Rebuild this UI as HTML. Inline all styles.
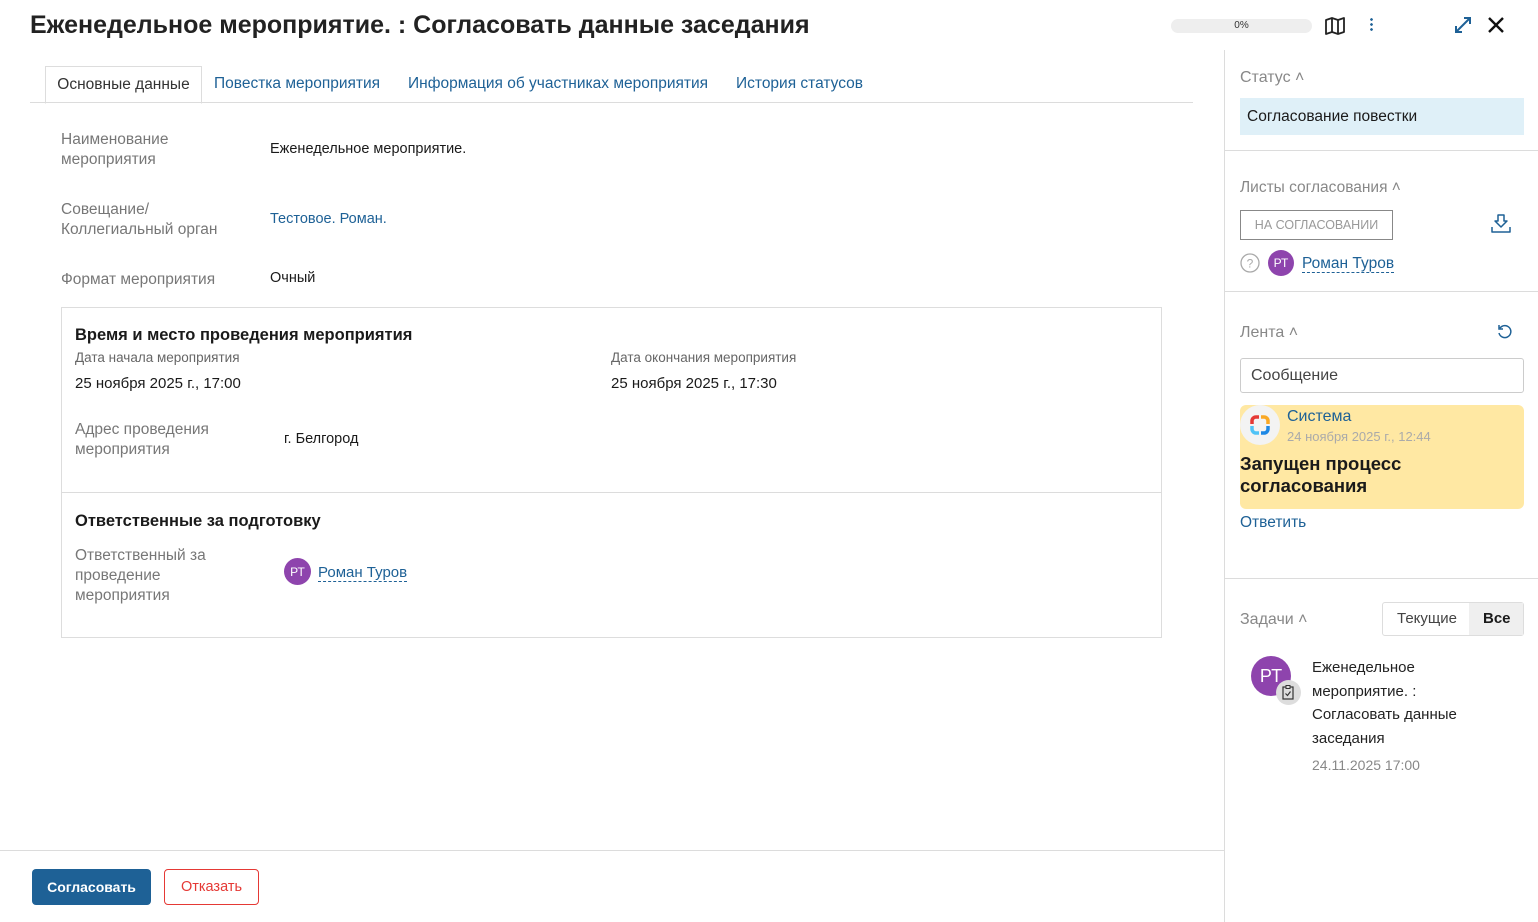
<!DOCTYPE html>
<html><head><meta charset="utf-8"><style>
*{box-sizing:border-box;margin:0;padding:0}
body{width:1538px;height:922px;overflow:hidden;background:#fff;font-family:"Liberation Sans","Noto Sans CJK SC",sans-serif;color:#1a1a1a;position:relative}
.a{position:absolute}
.lbl{color:#777;font-size:15.5px;line-height:20px}
.val{font-size:14.5px}
.blue{color:#1e6196}
.avatar{border-radius:50%;background:#8e44ad;color:#fff;display:flex;align-items:center;justify-content:center}
.sect{color:#888;font-size:16px}
.hr{background:#dcdcdc;height:1px}
</style></head><body>
<div class="a" style="left:30px;top:11px;font-size:25px;font-weight:bold;color:#222">Еженедельное мероприятие. : Согласовать данные заседания</div>
<div class="a" style="left:1171px;top:19px;width:141px;height:14px;background:#eee;border-radius:7px;font-size:10px;text-align:center;line-height:14px;color:#333">0%</div>
<svg class="a" style="left:1324px;top:16px" width="22" height="20" viewBox="0 0 22 20"><path d="M2 4l6-2 6 2 6-2v14l-6 2-6-2-6 2z M8 2v14 M14 4v14" fill="none" stroke="#222" stroke-width="1.8" stroke-linejoin="round"/></svg>
<div class="a" style="left:1370px;top:17px;width:3px;height:14px;background:radial-gradient(circle,#1e6196 1.2px,transparent 1.5px) 0 0/3px 5px"></div>
<svg class="a" style="left:1453px;top:15px" width="20" height="20" viewBox="0 0 20 20"><path d="M3 17L17 3 M11 3h6v6 M3 11v6h6" fill="none" stroke="#1e6196" stroke-width="2"/></svg>
<svg class="a" style="left:1486px;top:15px" width="20" height="20" viewBox="0 0 20 20"><path d="M3 3L17 17M17 3L3 17" stroke="#111" stroke-width="2.4"/></svg>

<div class="a hr" style="left:30px;top:102px;width:1163px"></div>
<div class="a" style="left:45px;top:66px;width:157px;height:38px;border:1px solid #ddd;border-bottom:1px solid #fff;font-size:15.5px;color:#333;text-align:center;line-height:36px">Основные данные</div>
<div class="a blue" style="left:214px;top:75px;font-size:15.5px">Повестка мероприятия</div>
<div class="a blue" style="left:408px;top:75px;font-size:15.5px">Информация об участниках мероприятия</div>
<div class="a blue" style="left:736px;top:75px;font-size:15.5px">История статусов</div>

<div class="a lbl" style="left:61px;top:130px">Наименование<br>мероприятия</div>
<div class="a val" style="left:270px;top:141px">Еженедельное мероприятие.</div>
<div class="a lbl" style="left:61px;top:200px">Совещание/<br>Коллегиальный орган</div>
<div class="a val blue" style="left:270px;top:211px">Тестовое. Роман.</div>
<div class="a lbl" style="left:61px;top:270px">Формат мероприятия</div>
<div class="a val" style="left:270px;top:270px">Очный</div>

<div class="a" style="left:61px;top:307px;width:1101px;height:331px;border:1px solid #ddd"></div>
<div class="a hr" style="left:61px;top:492px;width:1101px"></div>
<div class="a" style="left:75px;top:326px;font-size:16.5px;font-weight:bold">Время и место проведения мероприятия</div>
<div class="a" style="left:75px;top:350px;font-size:13.5px;color:#666">Дата начала мероприятия</div>
<div class="a val" style="left:75px;top:375px;font-size:15px">25 ноября 2025 г., 17:00</div>
<div class="a" style="left:611px;top:350px;font-size:13.5px;color:#666">Дата окончания мероприятия</div>
<div class="a val" style="left:611px;top:375px;font-size:15px">25 ноября 2025 г., 17:30</div>
<div class="a lbl" style="left:75px;top:420px">Адрес проведения<br>мероприятия</div>
<div class="a val" style="left:284px;top:431px">г. Белгород</div>
<div class="a" style="left:75px;top:512px;font-size:16.5px;font-weight:bold">Ответственные за подготовку</div>
<div class="a lbl" style="left:75px;top:546px">Ответственный за<br>проведение<br>мероприятия</div>
<div class="a avatar" style="left:284px;top:558px;width:27px;height:27px;font-size:12px">РТ</div>
<div class="a blue" style="left:318px;top:565px;font-size:15px;border-bottom:1px dashed #1e6196;line-height:16px">Роман Туров</div>

<div class="a hr" style="left:0;top:850px;width:1225px"></div>
<div class="a" style="left:32px;top:869px;width:119px;height:36px;background:#1e6196;border-radius:4px;color:#fff;font-size:14px;font-weight:bold;text-align:center;line-height:36px">Согласовать</div>
<div class="a" style="left:164px;top:869px;width:95px;height:36px;border:1px solid #e53935;border-radius:4px;color:#e53935;font-size:14.5px;text-align:center;line-height:34px">Отказать</div>

<div class="a" style="left:1224px;top:50px;width:1px;height:872px;background:#dcdcdc"></div>
<div class="a sect" style="left:1240px;top:69px">Статус ˄</div>
<div class="a" style="left:1240px;top:98px;width:284px;height:37px;background:#dff0f8;font-size:15.5px;line-height:37px;padding-left:7px">Согласование повестки</div>
<div class="a hr" style="left:1225px;top:150px;width:313px"></div>
<div class="a sect" style="left:1240px;top:179px;font-size:15.5px">Листы согласования ˄</div>
<div class="a" style="left:1240px;top:210px;width:153px;height:30px;border:1px solid #888;font-size:12.5px;color:#999;text-align:center;line-height:28px">НА СОГЛАСОВАНИИ</div>
<svg class="a" style="left:1490px;top:213px" width="22" height="22" viewBox="0 0 22 22"><path d="M8 2h6v6h3l-6 6-6-6h3z M2 14v5h18v-5" fill="none" stroke="#1e6196" stroke-width="1.5" stroke-linejoin="round"/></svg>
<svg class="a" style="left:1240px;top:253px" width="20" height="20" viewBox="0 0 20 20"><circle cx="10" cy="10" r="9" fill="none" stroke="#aaa" stroke-width="1.3"/><text x="10" y="14.5" font-size="12" text-anchor="middle" fill="#aaa" font-family="Liberation Sans">?</text></svg>
<div class="a avatar" style="left:1268px;top:250px;width:26px;height:26px;font-size:12px">РТ</div>
<div class="a blue" style="left:1302px;top:256px;font-size:15.5px;border-bottom:1px dashed #1e6196;line-height:16px">Роман Туров</div>
<div class="a hr" style="left:1225px;top:291px;width:313px"></div>
<div class="a sect" style="left:1240px;top:324px">Лента ˄</div>
<svg class="a" style="left:1496px;top:323px" width="18" height="18" viewBox="0 0 18 18"><path d="M4 5A6 6 0 1 1 3 10 M3 2v4h4" fill="none" stroke="#1e6196" stroke-width="1.5"/></svg>
<div class="a" style="left:1240px;top:358px;width:284px;height:35px;border:1px solid #ccc;border-radius:3px;font-size:16px;color:#444;line-height:33px;padding-left:10px">Сообщение</div>
<div class="a" style="left:1240px;top:405px;width:284px;height:104px;background:#ffe8a3;border-radius:6px"></div>
<div class="a" style="left:1240px;top:405px;width:40px;height:40px;border-radius:50%;background:#f3f3f3"></div>
<svg class="a" style="left:1249px;top:414px" width="22" height="22" viewBox="0 0 22 22"><g fill="none" stroke-width="3.5"><path d="M3 10V7a4 4 0 0 1 4-4h3" stroke="#e53935"/><path d="M12 3h3a4 4 0 0 1 4 4v3" stroke="#f9a825"/><path d="M19 12v3a4 4 0 0 1-4 4h-3" stroke="#1e88e5"/><path d="M10 19H7a4 4 0 0 1-4-4v-3" stroke="#4fc3f7"/></g></svg>
<div class="a blue" style="left:1287px;top:408px;font-size:16px">Система</div>
<div class="a" style="left:1287px;top:429px;font-size:13px;color:#aaa">24 ноября 2025 г., 12:44</div>
<div class="a" style="left:1240px;top:453px;font-size:18.5px;font-weight:bold;line-height:22px">Запущен процесс<br>согласования</div>
<div class="a blue" style="left:1240px;top:514px;font-size:15.5px">Ответить</div>
<div class="a hr" style="left:1225px;top:578px;width:313px"></div>
<div class="a sect" style="left:1240px;top:611px">Задачи ˄</div>
<div class="a" style="left:1382px;top:602px;width:142px;height:34px;border:1px solid #ddd;border-radius:3px"></div>
<div class="a" style="left:1469px;top:603px;width:54px;height:32px;background:#efefef"></div>
<div class="a" style="left:1397px;top:610px;font-size:15px;color:#444">Текущие</div>
<div class="a" style="left:1483px;top:610px;font-size:15px;font-weight:bold">Все</div>
<div class="a avatar" style="left:1251px;top:656px;width:40px;height:40px;font-size:18px">РТ</div>
<div class="a" style="left:1276px;top:680px;width:25px;height:25px;border-radius:50%;background:#ddd"></div>
<svg class="a" style="left:1281px;top:684px" width="14" height="16" viewBox="0 0 14 16"><rect x="2" y="3" width="10" height="12" fill="none" stroke="#333" stroke-width="1.2"/><rect x="5" y="1.5" width="4" height="3" fill="#ddd" stroke="#333"/><path d="M4.5 9.5l2 2 3-4" fill="none" stroke="#333" stroke-width="1.2"/></svg>
<div class="a" style="left:1312px;top:656px;font-size:15px;line-height:23.5px;color:#222">Еженедельное<br>мероприятие. :<br>Согласовать данные<br>заседания</div>
<div class="a" style="left:1312px;top:757px;font-size:14px;color:#888">24.11.2025 17:00</div>
</body></html>
